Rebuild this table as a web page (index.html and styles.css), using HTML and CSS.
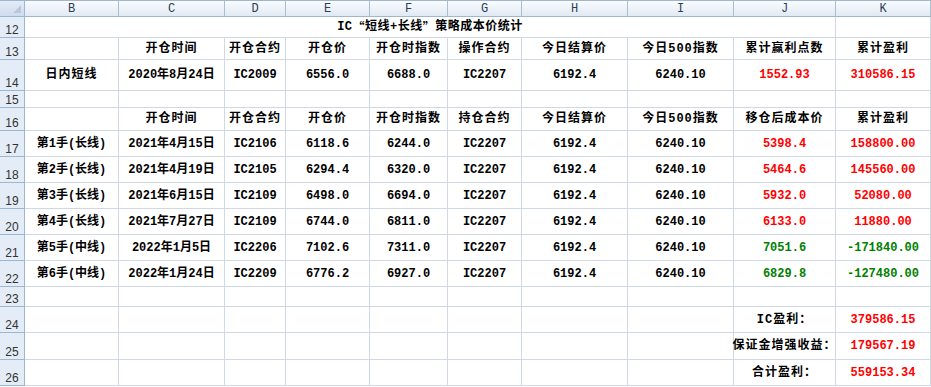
FILE: index.html
```html
<!DOCTYPE html>
<html lang="zh-CN">
<head>
<meta charset="utf-8">
<title>IC 策略成本价统计</title>
<link rel="stylesheet" href="styles.css">
</head>
<body>
<div class="sheet">
  <div class="corner"></div>
  <div class="ch">B</div><div class="ch">C</div><div class="ch">D</div><div class="ch">E</div><div class="ch">F</div><div class="ch">G</div><div class="ch">H</div><div class="ch">I</div><div class="ch">J</div><div class="ch">K</div>

  <div class="rh">12</div>
  <div class="c title">IC<span class="q">“</span>短线+长线<span class="q">”</span>策略成本价统计</div>
  <div class="c"></div>

  <div class="rh">13</div>
  <div class="c"></div><div class="c hd">开仓时间</div><div class="c hd">开仓合约</div><div class="c hd">开仓价</div><div class="c hd">开仓时指数</div><div class="c hd">操作合约</div><div class="c hd">今日结算价</div><div class="c hd">今日500指数</div><div class="c hd">累计赢利点数</div><div class="c hd">累计盈利</div>

  <div class="rh">14</div>
  <div class="c hd">日内短线</div><div class="c">2020年8月24日</div><div class="c">IC2009</div><div class="c">6556.0</div><div class="c">6688.0</div><div class="c">IC2207</div><div class="c">6192.4</div><div class="c">6240.10</div><div class="c red">1552.93</div><div class="c red">310586.15</div>

  <div class="rh">15</div>
  <div class="c"></div><div class="c"></div><div class="c"></div><div class="c"></div><div class="c"></div><div class="c"></div><div class="c"></div><div class="c"></div><div class="c"></div><div class="c"></div>

  <div class="rh">16</div>
  <div class="c"></div><div class="c hd">开仓时间</div><div class="c hd">开仓合约</div><div class="c hd">开仓价</div><div class="c hd">开仓时指数</div><div class="c hd">持仓合约</div><div class="c hd">今日结算价</div><div class="c hd">今日500指数</div><div class="c hd">移仓后成本价</div><div class="c hd">累计盈利</div>

  <div class="rh">17</div>
  <div class="c">第1手(长线)</div><div class="c">2021年4月15日</div><div class="c">IC2106</div><div class="c">6118.6</div><div class="c">6244.0</div><div class="c">IC2207</div><div class="c">6192.4</div><div class="c">6240.10</div><div class="c red">5398.4</div><div class="c red">158800.00</div>

  <div class="rh">18</div>
  <div class="c">第2手(长线)</div><div class="c">2021年4月19日</div><div class="c">IC2105</div><div class="c">6294.4</div><div class="c">6320.0</div><div class="c">IC2207</div><div class="c">6192.4</div><div class="c">6240.10</div><div class="c red">5464.6</div><div class="c red">145560.00</div>

  <div class="rh">19</div>
  <div class="c">第3手(长线)</div><div class="c">2021年6月15日</div><div class="c">IC2109</div><div class="c">6498.0</div><div class="c">6694.0</div><div class="c">IC2207</div><div class="c">6192.4</div><div class="c">6240.10</div><div class="c red">5932.0</div><div class="c red">52080.00</div>

  <div class="rh">20</div>
  <div class="c">第4手(长线)</div><div class="c">2021年7月27日</div><div class="c">IC2109</div><div class="c">6744.0</div><div class="c">6811.0</div><div class="c">IC2207</div><div class="c">6192.4</div><div class="c">6240.10</div><div class="c red">6133.0</div><div class="c red">11880.00</div>

  <div class="rh">21</div>
  <div class="c">第5手(中线)</div><div class="c">2022年1月5日</div><div class="c">IC2206</div><div class="c">7102.6</div><div class="c">7311.0</div><div class="c">IC2207</div><div class="c">6192.4</div><div class="c">6240.10</div><div class="c green">7051.6</div><div class="c green">-171840.00</div>

  <div class="rh">22</div>
  <div class="c">第6手(中线)</div><div class="c">2022年1月24日</div><div class="c">IC2209</div><div class="c">6776.2</div><div class="c">6927.0</div><div class="c">IC2207</div><div class="c">6192.4</div><div class="c">6240.10</div><div class="c green">6829.8</div><div class="c green">-127480.00</div>

  <div class="rh">23</div>
  <div class="c"></div><div class="c"></div><div class="c"></div><div class="c"></div><div class="c"></div><div class="c"></div><div class="c"></div><div class="c"></div><div class="c"></div><div class="c"></div>

  <div class="rh">24</div>
  <div class="c"></div><div class="c"></div><div class="c"></div><div class="c"></div><div class="c"></div><div class="c"></div><div class="c"></div><div class="c"></div><div class="c hd">IC盈利：</div><div class="c red">379586.15</div>

  <div class="rh">25</div>
  <div class="c"></div><div class="c"></div><div class="c"></div><div class="c"></div><div class="c"></div><div class="c"></div><div class="c"></div><div class="c"></div><div class="c hd">保证金增强收益：</div><div class="c red">179567.19</div>

  <div class="rh">26</div>
  <div class="c"></div><div class="c"></div><div class="c"></div><div class="c"></div><div class="c"></div><div class="c"></div><div class="c"></div><div class="c"></div><div class="c hd">合计盈利：</div><div class="c red">559153.34</div>
</div>
</body>
</html>
```
FILE: styles.css
```css
html, body {
  margin: 0;
  padding: 0;
  background: #ffffff;
  overflow: hidden;
}

.sheet {
  display: grid;
  grid-template-columns: 25px 94px 106px 61px 84px 78px 74px 106px 106px 102px 95px;
  grid-template-rows: 17px 21px 22px 31px 17px 23px repeat(6, 26px) 20px 26px 27px 26px 1px;
  width: 931px;
}

.corner {
  position: relative;
  background: linear-gradient(#e3ebf6, #cfdcee);
  border-top: 1px solid #9eb6ce;
  border-right: 1px solid #9eb6ce;
  border-bottom: 1px solid #9eb6ce;
}

.corner::after {
  content: "";
  position: absolute;
  right: 3px;
  bottom: 3px;
  width: 8px;
  height: 8px;
  background: #b9c9dd;
  clip-path: polygon(100% 0, 100% 100%, 0 100%);
}

.ch {
  background: linear-gradient(#fafcfe, #e1e9f4);
  border-top: 1px solid #9eb6ce;
  border-right: 1px solid #a8bdd6;
  border-bottom: 1px solid #9eb6ce;
  display: flex;
  align-items: center;
  justify-content: center;
  font: 12px "Liberation Mono", monospace;
  color: #2b3f56;
  line-height: 1;
}

.rh {
  background: #e4ecf7;
  border-right: 1px solid #9eb6ce;
  border-bottom: 1px solid #9eb6ce;
  display: flex;
  align-items: flex-end;
  justify-content: center;
  padding-bottom: 1px;
  font: 12px "Liberation Sans", sans-serif;
  color: #333333;
  line-height: 1;
  box-sizing: border-box;
}

.c {
  border-right: 1px solid #d0d7e5;
  border-bottom: 1px solid #d0d7e5;
  display: flex;
  align-items: center;
  justify-content: center;
  font: bold 12px "Liberation Mono", "Noto Sans CJK SC", monospace;
  color: #000000;
  white-space: nowrap;
  line-height: 1;
  box-sizing: border-box;
}

.hd {
  letter-spacing: 1px;
}

.title {
  grid-column: span 9;
  letter-spacing: 0.5px;
}

.q {
  font-family: "Noto Sans CJK SC", sans-serif;
}

.red {
  color: #ff0000;
}

.green {
  color: #008000;
}
```
